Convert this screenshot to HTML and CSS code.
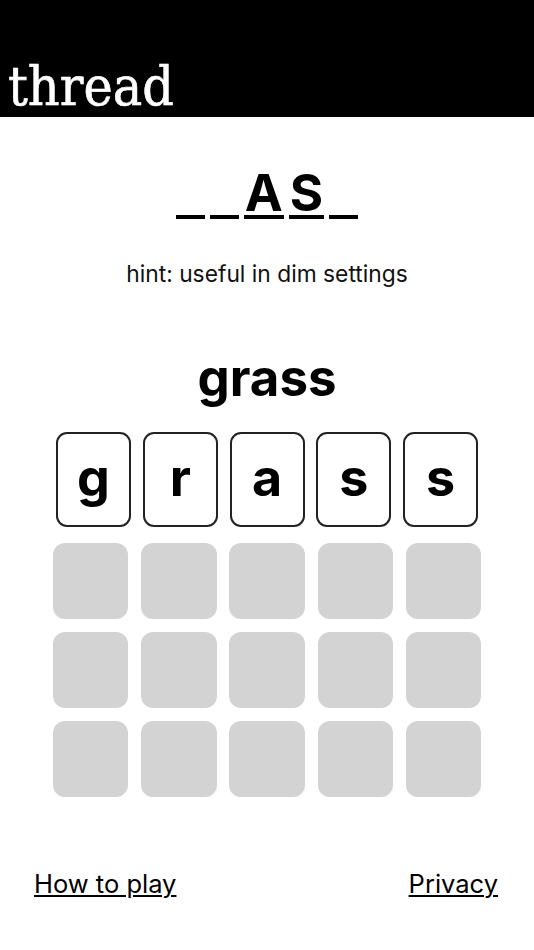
FILE: index.html
```html
<!DOCTYPE html>
<html lang="en">
<head>
<meta charset="utf-8">
<title>thread</title>
<link rel="stylesheet" href="styles.css">
</head>
<body>
<header class="topbar">
  <h1 class="logo">thread</h1>
</header>
<main class="game">
  <div class="puzzle">
    <span class="slot"></span>
    <span class="slot"></span>
    <span class="slot letter">A</span>
    <span class="slot letter">S</span>
    <span class="slot"></span>
  </div>
  <p class="hint">hint: useful in dim settings</p>
  <h2 class="word">grass</h2>
  <div class="current">
    <div class="tile">g</div>
    <div class="tile">r</div>
    <div class="tile">a</div>
    <div class="tile">s</div>
    <div class="tile">s</div>
  </div>
  <div class="board">
    <div class="cell"></div><div class="cell"></div><div class="cell"></div><div class="cell"></div><div class="cell"></div>
    <div class="cell"></div><div class="cell"></div><div class="cell"></div><div class="cell"></div><div class="cell"></div>
    <div class="cell"></div><div class="cell"></div><div class="cell"></div><div class="cell"></div><div class="cell"></div>
  </div>
</main>
<footer class="links">
  <a href="#" class="link">How to play</a>
  <a href="#" class="link">Privacy</a>
</footer>
</body>
</html>
```
FILE: styles.css
```css
html, body {
  margin: 0;
  padding: 0;
  background: #fff;
  color: #000;
  font-family: Inter, "Liberation Sans", sans-serif;
}

.topbar {
  height: 117px;
  background: #000;
  display: flex;
  align-items: flex-end;
  padding-left: 8px;
  box-sizing: border-box;
}

.logo {
  margin: 0;
  color: #fff;
  font-family: "DejaVu Serif", serif;
  font-stretch: condensed;
  font-weight: normal;
  font-size: 55px;
  line-height: 55px;
  padding-bottom: 3px;
  -webkit-text-stroke: 0.6px #fff;
}

.game {
  display: flex;
  flex-direction: column;
  align-items: center;
}

.puzzle {
  display: flex;
  justify-content: center;
  gap: 5px;
  margin-top: 54px;
}

.slot {
  display: block;
  width: 29px;
  height: 44px;
  border-bottom: 4px solid #000;
  font-weight: 700;
  font-size: 51px;
  line-height: 44px;
  text-align: center;
}

.slot.letter {
  width: auto;
  padding: 0 1px;
}

.hint {
  margin: 42px 0 0;
  font-size: 22.8px;
  line-height: 26px;
  color: #111;
}

.word {
  margin: 66px 0 0;
  font-size: 51px;
  line-height: 50px;
  font-weight: 700;
}

.current {
  display: flex;
  gap: 11.75px;
  margin-top: 29px;
}

.tile {
  width: 75px;
  height: 95px;
  box-sizing: border-box;
  border: 2px solid #222;
  border-radius: 11px;
  display: flex;
  align-items: center;
  justify-content: center;
  font-size: 52px;
  font-weight: 700;
  line-height: 1;
  padding-bottom: 4px;
}

.board {
  display: grid;
  grid-template-columns: repeat(5, 75.5px);
  grid-auto-rows: 76px;
  gap: 13px 12.75px;
  margin-top: 16px;
}

.cell {
  background: #d3d3d3;
  border-radius: 12px;
}

.links {
  display: flex;
  justify-content: space-between;
  padding: 0 36px 0 34px;
  margin-top: 72px;
}

.link {
  color: #000;
  font-size: 25.5px;
  line-height: 30px;
  text-decoration: underline;
  text-decoration-thickness: 1.5px;
  text-underline-offset: 2px;
}
```
